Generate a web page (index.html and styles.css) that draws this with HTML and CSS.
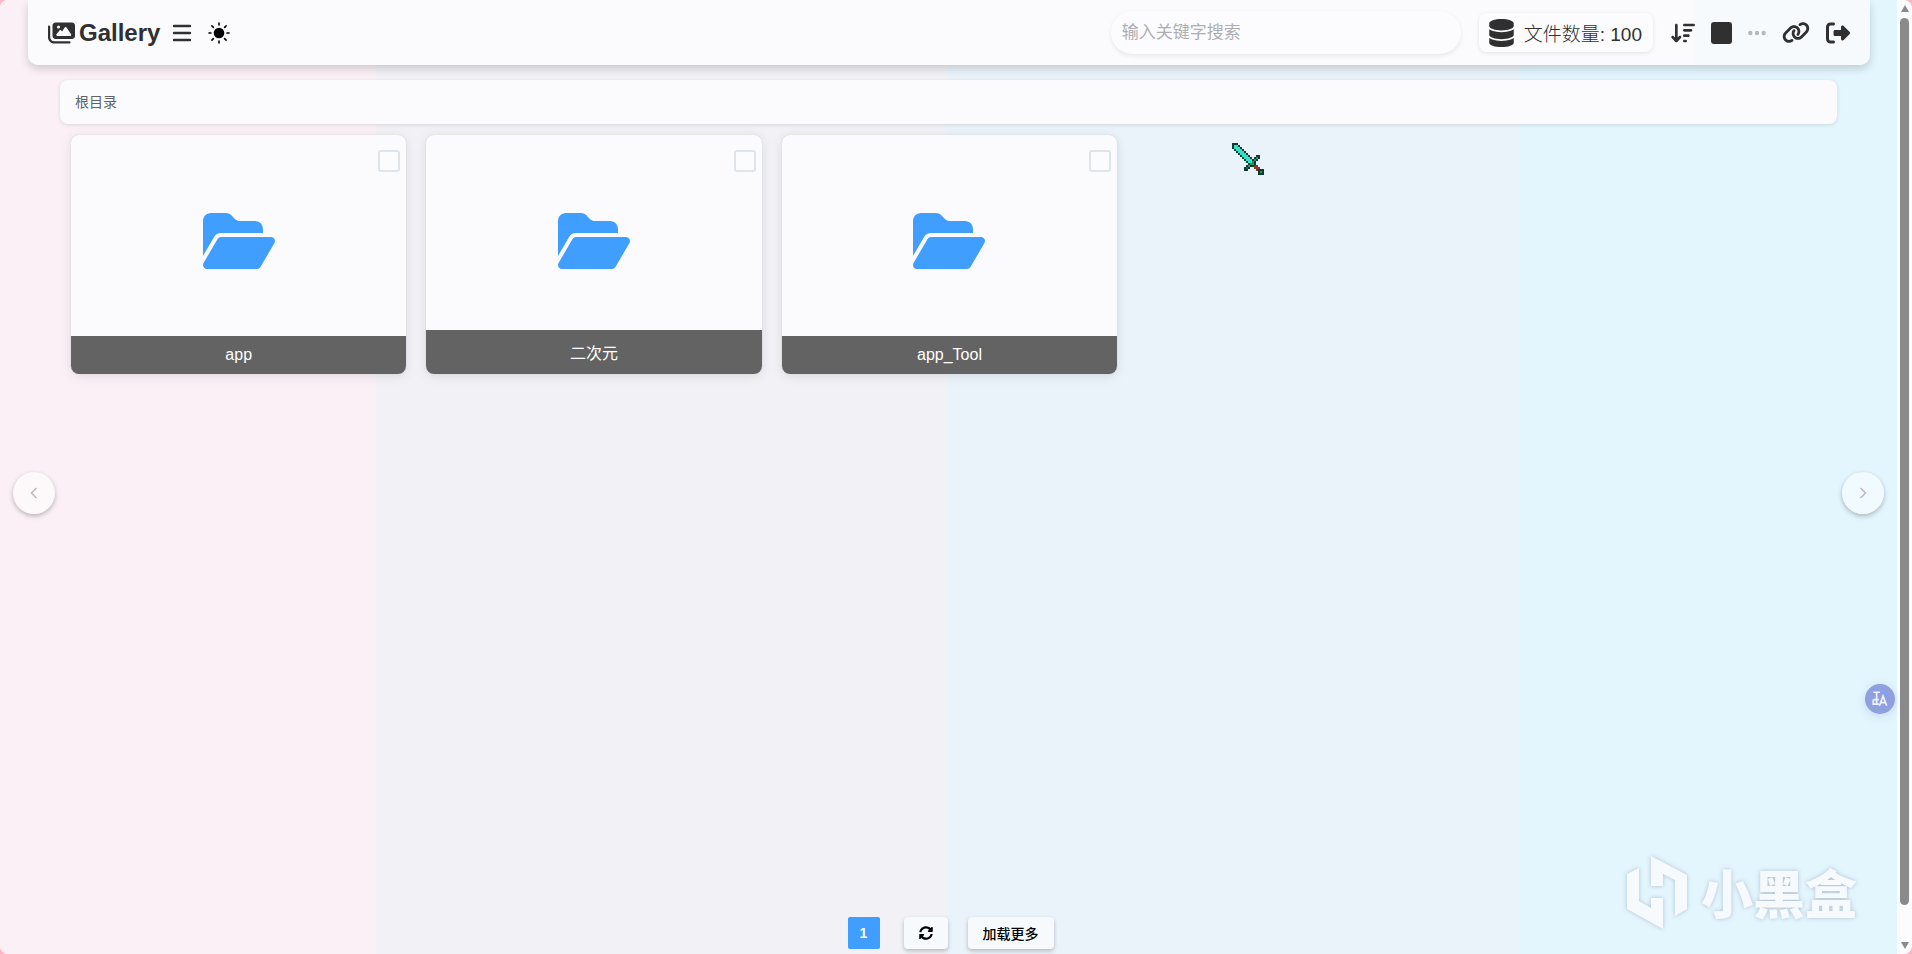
FILE: index.html
```html
<!DOCTYPE html>
<html lang="zh-CN">
<head>
<meta charset="utf-8">
<meta name="viewport" content="width=device-width, initial-scale=1">
<title>Gallery</title>
<link rel="stylesheet" href="styles.css">
</head>
<body>
<svg class="defs" aria-hidden="true">
  <symbol id="folder" viewBox="0 0 576 512"><path d="M88.7 223.8L0 375.8V96C0 60.7 28.7 32 64 32H181.5c17 0 33.300 6.700 45.300 18.700l26.500 26.500c12 12 28.300 18.700 45.300 18.700H416c35.300 0 64 28.700 64 64v32H144c-22.800 0-43.800 12.100-55.300 31.800zm27.600 16.100C122.100 230 132.600 224 144 224H544c11.500 0 22 6.100 27.700 16.100s5.700 22.200-.1 32.100l-112 192C453.900 474 443.400 480 432 480H32c-11.500 0-22-6.100-27.700-16.100s-5.700-22.200 .1-32.100l112-192z"/></symbol>
</svg>
<div class="app">
  <div class="page">
    <header class="topbar">
      <a class="brand" href="#">
        <svg class="brand-icon" viewBox="0 0 576 512" aria-hidden="true"><path d="M160 32c-35.3 0-64 28.7-64 64V320c0 35.3 28.7 64 64 64H512c35.3 0 64-28.7 64-64V96c0-35.3-28.7-64-64-64H160zM396 138.700l96 144c4.900 7.400 5.400 16.800 1.200 24.600S480.900 320 472 320H328 280 200c-9.200 0-17.600-5.300-21.600-13.600s-2.900-18.200 2.900-25.400l64-80c4.600-5.700 11.400-9 18.700-9s14.200 3.300 18.700 9l17.300 21.600 56-84C360.500 132 368 128 376 128s15.500 4 20 10.700zM192 128a32 32 0 1 1 64 0 32 32 0 1 1 -64 0zM48 120c0-13.300-10.700-24-24-24S0 106.700 0 120V344c0 75.100 60.900 136 136 136H456c13.300 0 24-10.700 24-24s-10.700-24-24-24H136c-48.600 0-88-39.400-88-88V120z"/></svg>
        <span>Gallery</span>
      </a>
      <button class="icon-btn menu-btn" type="button" aria-label="菜单">
        <svg width="20" height="18" viewBox="0 0 20 18"><path d="M2 2h16M2 9h16M2 16h16" fill="none" stroke="currentColor" stroke-width="2.400" stroke-linecap="round"/></svg>
      </button>
      <button class="icon-btn theme-btn" type="button" aria-label="主题">
        <svg width="22" height="22" viewBox="0 0 22 22"><circle cx="11" cy="11" r="5.300"/><path d="M11 1v2M11 19v2M1 11h2M19 11h2M3.900 3.900l1.500 1.500M16.600 16.600l1.500 1.500M3.900 18.100l1.500-1.500M16.600 5.400l1.500-1.500" stroke="currentColor" stroke-width="1.600" stroke-linecap="round"/></svg>
      </button>
      <input class="search" type="search" placeholder="输入关键字搜索" aria-label="搜索">
      <div class="stat">
        <svg width="25" height="28" viewBox="0 0 448 512" aria-hidden="true"><path d="M448 80v48c0 44.200-100.300 80-224 80S0 172.200 0 128V80C0 35.800 100.300 0 224 0S448 35.800 448 80zM393.200 214.700c20.800-7.400 39.900-16.900 54.800-28.600V288c0 44.200-100.300 80-224 80S0 332.200 0 288V186.100c14.900 11.800 34 21.200 54.800 28.600C99.700 230.700 159.500 240 224 240s124.300-9.300 169.200-25.300zM0 346.100c14.900 11.800 34 21.200 54.800 28.600C99.700 390.700 159.500 400 224 400s124.300-9.300 169.200-25.300c20.800-7.400 39.900-16.900 54.800-28.600V432c0 44.200-100.300 80-224 80S0 476.200 0 432V346.100z"/></svg>
        <span>文件数量: 100</span>
      </div>
      <nav class="tools" aria-label="工具">
        <button class="icon-btn" type="button" aria-label="排序"><svg width="24" height="22" viewBox="0 0 576 512"><path d="M151.600 469.600C145.500 476.200 137 480 128 480s-17.500-3.800-23.600-10.400l-88-96c-11.900-13-11.100-33.300 2-45.200s33.300-11.100 45.200 2L96 365.700V64c0-17.700 14.300-32 32-32s32 14.300 32 32V365.700l32.400-35.400c11.900-13 32.200-13.900 45.200-2s13.900 32.200 2 45.200l-88 96zM320 480c-17.700 0-32-14.300-32-32s14.300-32 32-32h32c17.700 0 32 14.300 32 32s-14.300 32-32 32H320zm0-128c-17.700 0-32-14.300-32-32s14.300-32 32-32h96c17.700 0 32 14.300 32 32s-14.300 32-32 32H320zm0-128c-17.700 0-32-14.300-32-32s14.300-32 32-32H480c17.700 0 32 14.300 32 32s-14.300 32-32 32H320zm0-128c-17.700 0-32-14.300-32-32s14.300-32 32-32H544c17.700 0 32 14.300 32 32s-14.300 32-32 32H320z"/></svg></button>
        <button class="icon-btn" type="button" aria-label="选择"><svg width="21" height="22" viewBox="0 0 21 22"><rect width="21" height="22" rx="3"/></svg></button>
        <button class="icon-btn muted" type="button" aria-label="更多"><svg width="18" height="6" viewBox="0 0 18 6"><circle cx="2.300" cy="3" r="2.200"/><circle cx="9" cy="3" r="2.200"/><circle cx="15.700" cy="3" r="2.200"/></svg></button>
        <button class="icon-btn" type="button" aria-label="链接"><svg width="28" height="23" viewBox="0 0 640 512"><path d="M579.800 267.700c56.500-56.500 56.500-148 0-204.500c-50-50-128.800-56.500-186.300-15.400l-1.600 1.100c-14.400 10.300-17.700 30.300-7.400 44.600s30.300 17.700 44.600 7.400l1.600-1.100c32.100-22.900 76-19.300 103.800 8.600c31.500 31.500 31.500 82.500 0 114L422.300 334.800c-31.500 31.500-82.500 31.500-114 0c-27.900-27.900-31.500-71.800-8.600-103.800l1.100-1.600c10.300-14.400 6.900-34.400-7.400-44.600s-34.400-6.900-44.600 7.400l-1.100 1.600C206.500 251.200 213 330 263 380c56.500 56.500 148 56.500 204.500 0L579.800 267.700zM60.200 244.300c-56.500 56.500-56.500 148 0 204.500c50 50 128.800 56.500 186.300 15.400l1.600-1.100c14.400-10.300 17.700-30.300 7.400-44.600s-30.300-17.700-44.600-7.400l-1.600 1.100c-32.100 22.900-76 19.300-103.800-8.600C74 372 74 321 105.500 289.500L217.700 177.200c31.500-31.500 82.500-31.500 114 0c27.900 27.900 31.500 71.800 8.600 103.900l-1.100 1.600c-10.300 14.400-6.900 34.400 7.400 44.600s34.400 6.900 44.600-7.400l1.100-1.600C433.500 260.800 427 182 377 132c-56.500-56.500-148-56.500-204.500 0L60.200 244.300z"/></svg></button>
        <button class="icon-btn" type="button" aria-label="退出"><svg width="24" height="24" viewBox="0 0 512 512"><path d="M377.900 105.900L500.700 228.700c7.200 7.200 11.300 17.100 11.300 27.300s-4.100 20.100-11.300 27.300L377.900 406.100c-6.400 6.400-15 9.900-24 9.900c-18.700 0-33.900-15.200-33.900-33.900l0-62.100-128 0c-17.700 0-32-14.300-32-32l0-64c0-17.700 14.300-32 32-32l128 0 0-62.100c0-18.700 15.200-33.900 33.900-33.900c9 0 17.600 3.600 24 9.900zM160 96L96 96c-17.700 0-32 14.300-32 32l0 256c0 17.700 14.300 32 32 32l64 0c17.700 0 32 14.300 32 32s-14.300 32-32 32l-64 0c-53 0-96-43-96-96L0 128C0 75 43 32 96 32l64 0c17.700 0 32 14.300 32 32s-14.300 32-32 32z"/></svg></button>
      </nav>
    </header>

    <nav class="crumbs" aria-label="路径"><a href="#">根目录</a></nav>

    <main class="grid">
      <article class="card">
        <input class="pick" type="checkbox" aria-label="选择 app">
        <svg class="folder" aria-hidden="true"><use href="#folder"/></svg>
        <p class="name">app</p>
      </article>
      <article class="card">
        <input class="pick" type="checkbox" aria-label="选择 二次元">
        <svg class="folder" aria-hidden="true"><use href="#folder"/></svg>
        <p class="name">二次元</p>
      </article>
      <article class="card">
        <input class="pick" type="checkbox" aria-label="选择 app_Tool">
        <svg class="folder" aria-hidden="true"><use href="#folder"/></svg>
        <p class="name">app_Tool</p>
      </article>
    </main>

    <footer class="pager">
      <button class="page-num" type="button">1</button>
      <button class="pager-btn" type="button" aria-label="刷新"><svg width="14" height="14" viewBox="0 0 512 512"><path d="M370.720 133.280C339.458 104.008 298.888 87.962 255.848 88c-77.458.068-144.328 53.178-162.791 126.850-1.344 5.363-6.122 9.150-11.651 9.150H24.103c-7.498 0-13.194-6.807-11.807-14.176C33.933 94.924 134.813 8 256 8c66.448 0 126.791 26.136 171.315 68.685L463.030 40.970C478.149 25.851 504 36.559 504 57.941V192c0 13.255-10.745 24-24 24H345.941c-21.382 0-32.090-25.851-16.971-40.971l41.750-41.749zM32 296h134.059c21.382 0 32.090 25.851 16.971 40.971l-41.750 41.750c31.262 29.273 71.835 45.319 114.876 45.280 77.418-.070 144.315-53.144 162.787-126.849 1.344-5.363 6.122-9.150 11.651-9.150h57.304c7.498 0 13.194 6.807 11.807 14.176C478.067 417.076 377.187 504 256 504c-66.448 0-126.791-26.136-171.315-68.685L48.970 471.030C33.851 486.149 8 475.441 8 454.059V320c0-13.255 10.745-24 24-24z"/></svg></button>
      <button class="pager-btn" type="button">加载更多</button>
    </footer>

    <button class="side prev" type="button" aria-label="上一页"><svg width="14" height="14" viewBox="0 0 14 14"><path d="M9.500 2L4.500 7l5 5"/></svg></button>
    <button class="side next" type="button" aria-label="下一页"><svg width="14" height="14" viewBox="0 0 14 14"><path d="M4.500 2l5 5-5 5"/></svg></button>

    <button class="translate" type="button" aria-label="翻译"><svg width="18" height="18" viewBox="0 0 16 16"><path d="M2 2h6M5 2v11M2 8.500h5M2 8.500v4h5M7.500 14l3.200-8.500L14 14M8.500 11.300H13" fill="none" stroke="#eef2ff" stroke-width="1.500"/><path d="M10 2.500h2.500M13.500 3.500v2" fill="none" stroke="#6fa4ff" stroke-width="1.400"/></svg></button>

    <svg class="cursor" viewBox="0 0 16 16" shape-rendering="crispEdges" aria-hidden="true">
      <path stroke="#0d3b34" d="M0 .5h3M0 1.500h4M0 2.500h5M1 3.500h5M2 4.500h5M3 5.500h5M4 6.500h5M12 6.500h2M5 7.500h5M11 7.500h3M6 8.500h7M7 9.500h5M8 10.500h4M7 11.500h4M6 12.500h3M6 13.500h2M13 13.500h3M13 14.500h3M13 15.500h3"/>
      <path stroke="#33e0c5" d="M1 1.500h2M1 2.500h3M2 3.500h3M3 4.500h3M4 5.500h3M5 6.500h3M6 7.500h3M7 8.500h3M8 9.500h2"/>
      <path stroke="#2a9069" d="M12 7.500h1M11 8.500h1M10 9.500h1M9 10.500h2M8 11.500h1M14 14.500h1"/>
      <path stroke="#31565a" d="M7 12.500h1"/>
      <path stroke="#853a22" d="M11 11.500h2M11 12.500h3M12 13.500h1"/>
    </svg>

    <div class="watermark">
      <svg width="64" height="76" viewBox="0 0 64 76" aria-hidden="true"><path d="M2 20l12-6v33l12 7v-10h12v31L2 55zM26 2l36 19v34l-12 7V26l-12-6v12H26z"/></svg>
      <span>小黑盒</span>
    </div>
  </div>
  <div class="scrollbar" aria-hidden="true">
    <svg width="8" height="7" viewBox="0 0 8 7"><path d="M4 0l4 7H0z"/></svg>
    <div class="thumb"></div>
    <svg width="8" height="7" viewBox="0 0 8 7"><path d="M0 0h8L4 7z"/></svg>
  </div>
</div>
</body>
</html>
```

FILE: styles.css
```css
* { box-sizing: border-box; }

html { background: #ffb3c3; }

body {
  margin: 0;
  font-family: "Liberation Sans", "Noto Sans CJK SC", sans-serif;
  color: #303030;
}

button, input { font: inherit; color: inherit; }
button { border: 0; padding: 0; background: none; cursor: pointer; }
a { color: inherit; text-decoration: none; }
svg { fill: currentColor; display: block; }

.defs { position: absolute; width: 0; height: 0; }

.app {
  display: flex;
  min-height: 100vh;
  border-radius: 8px;
  overflow: hidden;
  background: #fcfcfe;
}

.page {
  position: relative;
  flex: 1;
  display: flex;
  flex-direction: column;
  padding: 0 27px 5px 28px;
  background: linear-gradient(90deg, #faf0f5 19.8%, #f2f2f6 19.8% 49.8%, #eaf2fa 49.8% 80.1%, #e3f5fd 80.1%);
}

.topbar {
  display: flex;
  align-items: center;
  height: 65px;
  padding: 0 20px;
  border-radius: 0 0 10px 10px;
  background: linear-gradient(90deg, #fbfbfd 90.5%, #f6fafd 90.5%);
  box-shadow: 0 4px 8px rgba(0, 0, 0, 0.16);
}

.brand {
  display: flex;
  align-items: center;
  gap: 4px;
  font-size: 24px;
  font-weight: 700;
}
.brand-icon { width: 27px; height: 24px; }

.icon-btn { display: flex; align-items: center; }
.menu-btn { margin-left: 12px; }
.theme-btn { margin-left: 16px; color: #000; }
.muted { color: #b8b8bb; }

.search {
  width: 350px;
  height: 43px;
  margin-left: auto;
  padding: 0 11px;
  border: 0;
  border-radius: 22px;
  outline: 0;
  background: #fcfcfe;
  font-size: 17px;
  box-shadow: 0 2px 5px rgba(0, 0, 0, 0.08);
}
.search::placeholder { color: #aeaeb2; opacity: 1; }

.stat {
  display: flex;
  align-items: center;
  gap: 10px;
  height: 39px;
  margin: 0 18px;
  padding: 0 11px 0 10px;
  border-radius: 8px;
  background: #fcfcfe;
  font-size: 19px;
  font-weight: 300;
  box-shadow: 0 1px 4px rgba(0, 0, 0, 0.1);
}

.tools { display: flex; align-items: center; gap: 16px; }

.crumbs {
  display: flex;
  align-items: center;
  height: 44px;
  margin: 15px 33px 0 32px;
  padding: 0 15px 2px;
  border-radius: 8px;
  background: #fbfbfd;
  color: #606266;
  font-size: 14px;
  box-shadow: 0 1px 4px rgba(0, 0, 0, 0.12);
}

.grid {
  display: grid;
  grid-template-columns: repeat(5, 1fr);
  gap: 20px;
  margin: 11px 42px 0 43px;
}

.card {
  position: relative;
  display: flex;
  flex-direction: column;
  align-items: center;
  height: 239px;
  border-radius: 8px;
  overflow: hidden;
  background: #fbfbfd;
  box-shadow: 0 2px 12px rgba(0, 0, 0, 0.1), 0 0 1px rgba(90, 110, 150, 0.3);
}

.folder {
  width: 72px;
  height: 64px;
  margin-top: 74px;
  color: #409eff;
}

.name {
  width: 100%;
  margin: auto 0 0;
  padding: 10px;
  background: #636363;
  color: #fff;
  font-size: 16px;
  text-align: center;
}

.pick {
  position: absolute;
  top: 15px;
  right: 6px;
  width: 22px;
  height: 22px;
  margin: 0;
  appearance: none;
  border: 2px solid #dfe3ea;
  border-radius: 3px;
  background: #fcfcfe;
}

.pager {
  display: flex;
  justify-content: center;
  align-items: center;
  margin-top: auto;
  padding-left: 3px;
  font-size: 14px;
}
.page-num {
  width: 32px;
  height: 32px;
  margin-right: 24px;
  border-radius: 2px;
  background: #409eff;
  color: #fff;
  font-weight: 700;
}
.pager-btn {
  height: 32px;
  padding: 0 15px;
  border-radius: 4px;
  background: #f7fafd;
  color: #000;
  font-weight: 500;
  box-shadow: 0 2px 4px rgba(0, 0, 0, 0.24);
}
.pager-btn + .pager-btn { margin-left: 20px; }

.side {
  position: absolute;
  top: 472px;
  display: grid;
  place-items: center;
  width: 42px;
  height: 42px;
  border-radius: 50%;
  background: rgba(255, 255, 255, 0.5);
  box-shadow: 0 2px 5px rgba(0, 0, 0, 0.26);
}
.side path { fill: none; stroke: #b9b6ba; stroke-width: 1.4; }
.prev { left: 13px; }
.next { right: 13px; }

.translate {
  position: absolute;
  top: 684px;
  right: 2px;
  display: grid;
  place-items: center;
  width: 30px;
  height: 30px;
  border-radius: 50%;
  background: #8f9fe0;
  box-shadow: 0 2px 8px rgba(100, 140, 230, 0.24);
}

.cursor {
  position: absolute;
  left: 1232px;
  top: 143px;
  width: 32px;
  height: 32px;
}

.watermark {
  position: absolute;
  right: 40px;
  bottom: 24px;
  display: flex;
  align-items: center;
  gap: 12px;
  color: #f6fafd;
  font-family: "Noto Sans CJK SC", sans-serif;
  font-size: 52px;
  font-weight: 900;
  line-height: 72px;
  filter: drop-shadow(0 0 2px rgba(120, 140, 170, 0.5));
}

.scrollbar {
  display: flex;
  flex-direction: column;
  align-items: center;
  gap: 6px;
  width: 15px;
  padding: 5px 0;
  color: #8a8a8a;
}
.thumb {
  width: 9px;
  height: 93vh;
  margin-bottom: auto;
  border-radius: 5px;
  background: #8a8a8a;
}
```
